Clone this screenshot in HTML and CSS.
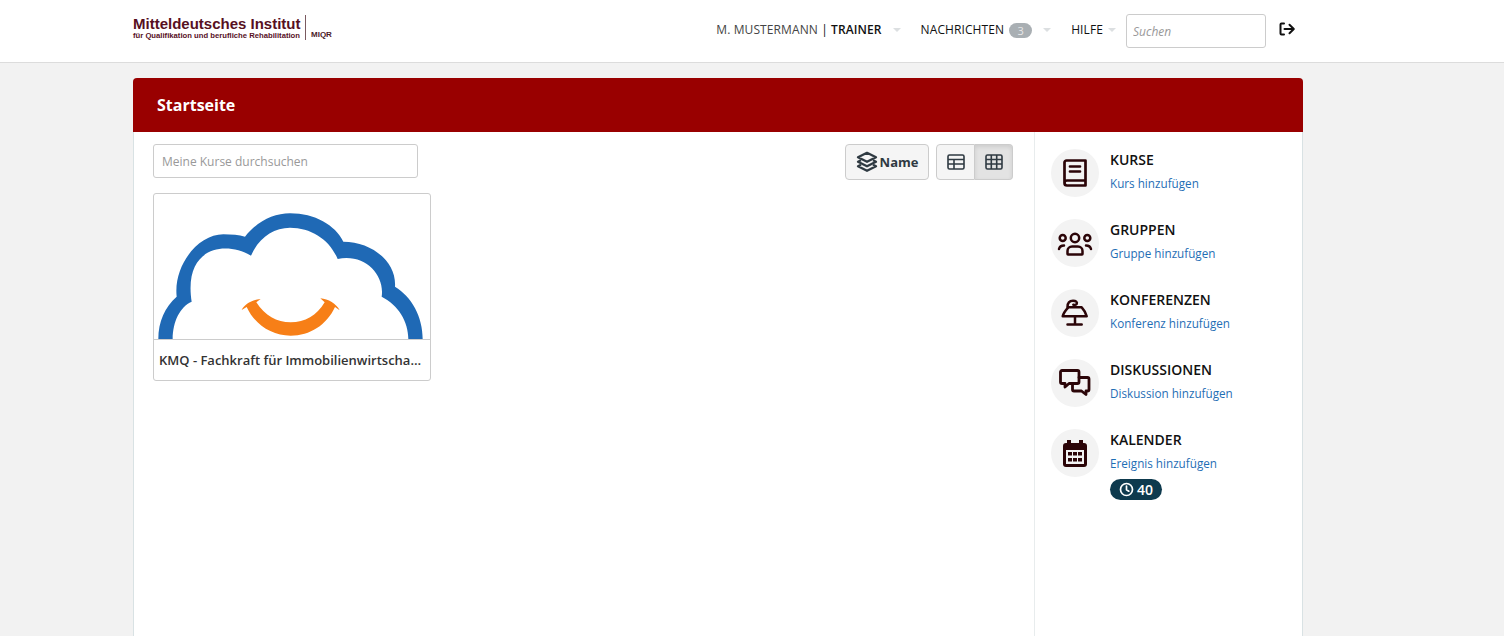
FILE: index.html
```html
<!DOCTYPE html>
<html lang="de">
<head>
  <meta charset="UTF-8" />
  <meta name="viewport" content="width=device-width, initial-scale=1.0"/>
  <title>Startseite</title>
  <link rel="stylesheet" href="styles.css">
</head>
<body>

  <!-- Top bar -->
  <header class="topbar">
    <div class="topbar-inner">
      <a class="logo" href="#">
        <span class="logo-text">
          <span class="logo-title">Mitteldeutsches Institut</span>
          <span class="logo-sub">für Qualifikation und berufliche Rehabilitation</span>
        </span>
        <span class="logo-short">MIQR</span>
      </a>
      <nav class="topnav">
        <a class="nav-item nav-user" href="#"><span>M. MUSTERMANN <span class="sep">|</span> <b>TRAINER</b></span><i class="caret"></i></a>
        <a class="nav-item nav-msg" href="#"><span>NACHRICHTEN</span><span class="count">3</span><i class="caret"></i></a>
        <a class="nav-item nav-help" href="#"><span>HILFE</span><i class="caret"></i></a>
        <input class="nav-search" type="text" placeholder="Suchen" />
        <a class="logout" href="#">
          <svg width="18" height="18" viewBox="0 0 18 18" fill="none" stroke="#111" stroke-width="2" stroke-linecap="round" stroke-linejoin="round">
            <path d="M6 2.500H3.500a1 1 0 0 0-1 1v9a1 1 0 0 0 1 1H6"/>
            <path d="M6.500 8h9M11.500 3.800 15.800 8l-4.300 4.200"/>
          </svg>
        </a>
      </nav>
    </div>
  </header>

  <!-- Main card -->
  <main class="panel">
    <div class="panel-head">Startseite</div>
    <div class="panel-body">

      <section class="courses">
        <div class="toolbar">
          <input class="course-search" type="text" placeholder="Meine Kurse durchsuchen" />
          <div class="toolbar-right">
            <button class="btn btn-sort">
              <svg width="22" height="22" viewBox="0 0 22 22" fill="none" stroke="#2f3a42" stroke-width="2.300" stroke-linejoin="round">
                <path d="M11 1.800 20 6.300 11 10.800 2 6.300Z"/>
                <path d="M5 9.300 2 10.800l9 4.500 9-4.500-3-1.500"/>
                <path d="M5 13.800 2 15.300l9 4.500 9-4.500-3-1.500"/>
              </svg>
              Name
            </button>
            <div class="btn-group">
              <button class="btn btn-view">
                <svg width="18" height="16" viewBox="0 0 18 16" fill="none" stroke="#2f3a42" stroke-width="1.600">
                  <rect x="1" y="1" width="16" height="14" rx="1.500"/>
                  <path d="M1 5.500h16M1 10h16M7 5.500V15"/>
                </svg>
              </button>
              <button class="btn btn-view active">
                <svg width="18" height="16" viewBox="0 0 18 16" fill="none" stroke="#2f3a42" stroke-width="1.600">
                  <rect x="1" y="1" width="16" height="14" rx="1.500"/>
                  <path d="M1 5.500h16M1 10h16M6.300 1v14M11.700 1v14"/>
                </svg>
              </button>
            </div>
          </div>
        </div>

        <a class="course-card" href="#">
          <div class="course-img">
            <svg width="276" height="145" viewBox="27 27 828 435">
              <path fill="#1f69b5" d="M40 462C40 410 60 365 95 335C85 240 160 148 235 148C260 148 282 150 300 155C335 110 385 85 435 85C510 85 570 120 595 170C680 170 755 230 750 305C800 335 833 395 833 462H790C790 410 760 360 710 335C720 270 660 205 578 222C555 165 500 128 435 128C385 128 340 160 318 212C235 165 115 190 140 350C105 365 83 410 83 462Z"/>
              <path fill="#f77f17" d="M290 375C298 358 320 344 347 342L334 352C360 392 395 412 437 412C480 412 515 392 539 352L526 340C550 342 574 356 584 376L570 366C545 420 495 452 437 452C380 452 330 420 305 366Z"/>
            </svg>
          </div>
          <div class="course-title">KMQ - Fachkraft für Immobilienwirtschaft (IHK)</div>
        </a>
      </section>

      <aside class="sidebar">
        <div class="side-item">
          <div class="side-icon">
            <svg width="26" height="30" viewBox="0 0 26 30" fill="none" stroke="#2b0508" stroke-width="2.700" stroke-linejoin="round" stroke-linecap="round">
              <path d="M2.500 25V4.500a2 2 0 0 1 2-2H23.500v20H5a2.500 2.500 0 0 0-2.500 2.500 2.500 2.500 0 0 0 2.500 2.500H23.500v-5"/>
              <path d="M8 8.500h10M8 13.500h10"/>
            </svg>
          </div>
          <div class="side-text">
            <h4>KURSE</h4>
            <a href="#">Kurs hinzufügen</a>
          </div>
        </div>
        <div class="side-item">
          <div class="side-icon">
            <svg width="36" height="26" viewBox="0 0 36 26" fill="none" stroke="#2b0508" stroke-width="2.500" stroke-linecap="round" stroke-linejoin="round">
              <circle cx="18" cy="8" r="4.200"/>
              <circle cx="5.700" cy="8" r="3"/>
              <circle cx="30.300" cy="8" r="3"/>
              <path d="M10.500 24v-3c0-2.500 2-4.500 4.500-4.500h6c2.500 0 4.500 2 4.500 4.500v3c0 .4-.3.500-.5.500H11c-.2 0-.5-.1-.5-.5Z"/>
              <path d="M2 19c.5-2 2.500-3.500 5-3.500M34 19c-.5-2-2.500-3.500-5-3.500"/>
            </svg>
          </div>
          <div class="side-text">
            <h4>GRUPPEN</h4>
            <a href="#">Gruppe hinzufügen</a>
          </div>
        </div>
        <div class="side-item">
          <div class="side-icon">
            <svg width="30" height="30" viewBox="0 0 30 30" fill="none" stroke="#2b0508" stroke-width="2.500" stroke-linecap="round" stroke-linejoin="round">
              <path d="M7.500 9C7.500 5 9.500 2.700 13 2.700c3 0 4.500 1.500 3.700 3.200-.5 1-2.500 1.200-3.400.8"/>
              <path d="M8.300 9.300h13.400c2.300 2.500 4.200 5.500 5 9H2.700c.8-3.500 3.300-6.500 5.600-9Z"/>
              <path d="M15 18.300V26M7.500 26.500h14.200"/>
            </svg>
          </div>
          <div class="side-text">
            <h4>KONFERENZEN</h4>
            <a href="#">Konferenz hinzufügen</a>
          </div>
        </div>
        <div class="side-item">
          <div class="side-icon">
            <svg width="32" height="28" viewBox="0 0 32 28" fill="none" stroke="#2b0508" stroke-width="2.800" stroke-linejoin="round" stroke-linecap="round">
              <path d="M3 1.500h15.500a1.500 1.500 0 0 1 1.500 1.500v10a1.500 1.500 0 0 1-1.500 1.500H10l-4 3.500v-3.500H3A1.500 1.500 0 0 1 1.500 13V3A1.500 1.500 0 0 1 3 1.500Z"/>
              <path d="M20 8.500h8.500A1.500 1.500 0 0 1 30 10v10.500a1.500 1.500 0 0 1-1.500 1.500H27v3.500l-4.500-3.500H15a1.500 1.500 0 0 1-1.500-1.500V15"/>
            </svg>
          </div>
          <div class="side-text">
            <h4>DISKUSSIONEN</h4>
            <a href="#">Diskussion hinzufügen</a>
          </div>
        </div>
        <div class="side-item">
          <div class="side-icon">
            <svg width="24" height="27" viewBox="0 0 24 27">
              <path fill="#2b0508" d="M4 0h4v3h8V0h4v3h1a3 3 0 0 1 3 3v18a3 3 0 0 1-3 3H3a3 3 0 0 1-3-3V6a3 3 0 0 1 3-3h1ZM3 10v14h18V10Z"/>
              <path fill="#2b0508" d="M5 12h4v3.500H5zM10 12h4v3.500h-4zM15 12h4v3.500h-4zM5 18h4v3.500H5zM10 18h4v3.500h-4zM15 18h4v3.500h-4z"/>
            </svg>
          </div>
          <div class="side-text">
            <h4>KALENDER</h4>
            <a href="#">Ereignis hinzufügen</a>
            <span class="pill">
              <svg width="15" height="15" viewBox="0 0 15 15" fill="none" stroke="#fff" stroke-width="1.700" stroke-linecap="round" stroke-linejoin="round">
                <circle cx="7.500" cy="7.500" r="6"/>
                <path d="M7.500 4v3.700l2.300 1.500"/>
              </svg>
              40
            </span>
          </div>
        </div>
      </aside>

    </div>
  </main>

</body>
</html>
```

FILE: styles.css
```css
* {
  box-sizing: border-box;
}

body, html {
  margin: 0;
  padding: 0;
  height: 100vh;
  overflow: hidden;
}

body {
  background: #f2f2f2;
  font-family: 'Open Sans', sans-serif;
  color: #222;
}

a {
  text-decoration: none;
  color: inherit;
}

/* top bar */
.topbar {
  background: #fff;
  height: 63px;
  border-bottom: 1px solid #dcdcdc;
}

.topbar-inner {
  width: 1170px;
  margin-left: 133px;
  display: flex;
  justify-content: space-between;
  align-items: flex-start;
}

.logo {
  display: flex;
  align-items: flex-end;
  margin-top: 15px;
  font-family: 'Liberation Sans', sans-serif;
  color: #57101f;
}

.logo-text {
  display: flex;
  flex-direction: column;
  width: 173px;
  padding-right: 4px;
  border-right: 1px solid #7a5a60;
  height: 25px;
}

.logo-title {
  font-size: 15px;
  font-weight: bold;
  line-height: 17px;
  white-space: nowrap;
}

.logo-sub {
  font-size: 7.700px;
  font-weight: bold;
  line-height: 8px;
  white-space: nowrap;
}

.logo-short {
  font-size: 8px;
  font-weight: bold;
  line-height: 8px;
  padding-left: 5px;
  margin-bottom: 1px;
  color: #4a2028;
}

.topnav {
  display: flex;
  align-items: flex-start;
  padding-right: 7px;
}

.nav-item {
  display: flex;
  align-items: center;
  font-size: 12px;
  letter-spacing: 0.1px;
  line-height: 16px;
  margin-top: 22px;
  margin-right: 20px;
  color: #111;
  white-space: nowrap;
}

.nav-user {
  color: #444;
}

.nav-user b {
  color: #111;
  font-weight: 600;
}

.sep {
  color: #111;
}

.nav-help {
  margin-right: 10px;
}

.count {
  background: #a9afb3;
  color: #e8e8e8;
  font-size: 11px;
  line-height: 15px;
  width: 23px;
  margin-left: 5px;
  text-align: center;
  border-radius: 8px;
}

.caret {
  width: 0;
  height: 0;
  margin-left: 11px;
  border-left: 4px solid transparent;
  border-right: 4px solid transparent;
  border-top: 4px solid #dcdfe1;
}

.nav-help .caret {
  margin-left: 5px;
}

.nav-search {
  width: 140px;
  height: 34px;
  margin-top: 14px;
  padding: 0 6px;
  border: 1px solid #ccc;
  border-radius: 3px;
  font-family: 'Open Sans', sans-serif;
  font-size: 12px;
  font-style: italic;
}

.nav-search::placeholder {
  color: #999;
}

.logout {
  margin: 21px 0 0 12px;
  line-height: 0;
}

/* main card */
.panel {
  width: 1170px;
  height: 700px;
  margin: 15px 0 0 133px;
  background: #fff;
  border-radius: 4px 4px 0 0;
  border: 1px solid #d9e2e4;
  border-top: none;
}

.panel-head {
  background: #990000;
  color: #fff;
  height: 54px;
  margin: 0 -1px;
  padding: 0 24px;
  border-radius: 4px 4px 0 0;
  font-size: 16px;
  font-weight: 700;
  line-height: 54px;
}

.panel-body {
  display: flex;
  height: calc(100% - 54px);
}

.courses {
  width: 901px;
  padding: 12px 21px 0 19px;
  border-right: 1px solid #e8eced;
}

.toolbar {
  display: flex;
  justify-content: space-between;
  align-items: flex-start;
  height: 49px;
}

.course-search {
  width: 265px;
  height: 34px;
  padding: 0 8px;
  border: 1px solid #ccc;
  border-radius: 3px;
  font-family: 'Open Sans', sans-serif;
  font-size: 12px;
}

.course-search::placeholder {
  color: #999;
}

.toolbar-right {
  display: flex;
  gap: 7px;
}

.btn {
  height: 36px;
  background: #f5f5f5;
  border: 1px solid #ccc;
  border-radius: 4px;
  font-family: 'Open Sans', sans-serif;
  color: #2f3a42;
  cursor: pointer;
  display: flex;
  align-items: center;
  justify-content: center;
}

.btn-sort {
  width: 84px;
  gap: 2px;
  font-size: 13px;
  font-weight: 700;
  padding: 0;
}

.btn-group {
  display: flex;
}

.btn-view {
  width: 39px;
  padding: 0;
  border-radius: 4px 0 0 4px;
}

.btn-view.active {
  width: 38px;
  background: #e3e3e3;
  border-left: none;
  border-radius: 0 4px 4px 0;
  box-shadow: inset 0 2px 4px rgba(0, 0, 0, 0.1);
}

.course-card {
  display: block;
  width: 278px;
  height: 188px;
  background: #fff;
  border: 1px solid #ccc;
  border-radius: 3px;
}

.course-img {
  height: 146px;
  line-height: 0;
  border-bottom: 1px solid #ccc;
}

.course-title {
  padding: 0 8px 0 5px;
  font-size: 13px;
  font-weight: 600;
  line-height: 40px;
  color: #333;
  white-space: nowrap;
  overflow: hidden;
  text-overflow: ellipsis;
}

/* right column */
.sidebar {
  padding: 17px 0 0 16px;
  flex: 1;
}

.side-item {
  display: flex;
  gap: 11px;
  height: 70px;
}

.side-icon {
  width: 48px;
  height: 48px;
  border-radius: 50%;
  background: #f3f3f3;
  display: flex;
  align-items: center;
  justify-content: center;
  flex-shrink: 0;
}

.side-text {
  padding-top: 2px;
}

.side-text h4 {
  margin: 0;
  font-size: 14px;
  font-weight: 600;
  line-height: 18px;
  color: #111;
}

.side-text a {
  display: block;
  margin-top: 5px;
  font-size: 11.700px;
  line-height: 18px;
  color: #1f6eb5;
}

.pill {
  display: inline-flex;
  align-items: center;
  gap: 3px;
  height: 21px;
  margin-top: 7px;
  padding: 0 9px;
  background: #0e3a4e;
  color: #fff;
  border-radius: 11px;
  font-size: 14px;
  font-weight: 600;
}
```
